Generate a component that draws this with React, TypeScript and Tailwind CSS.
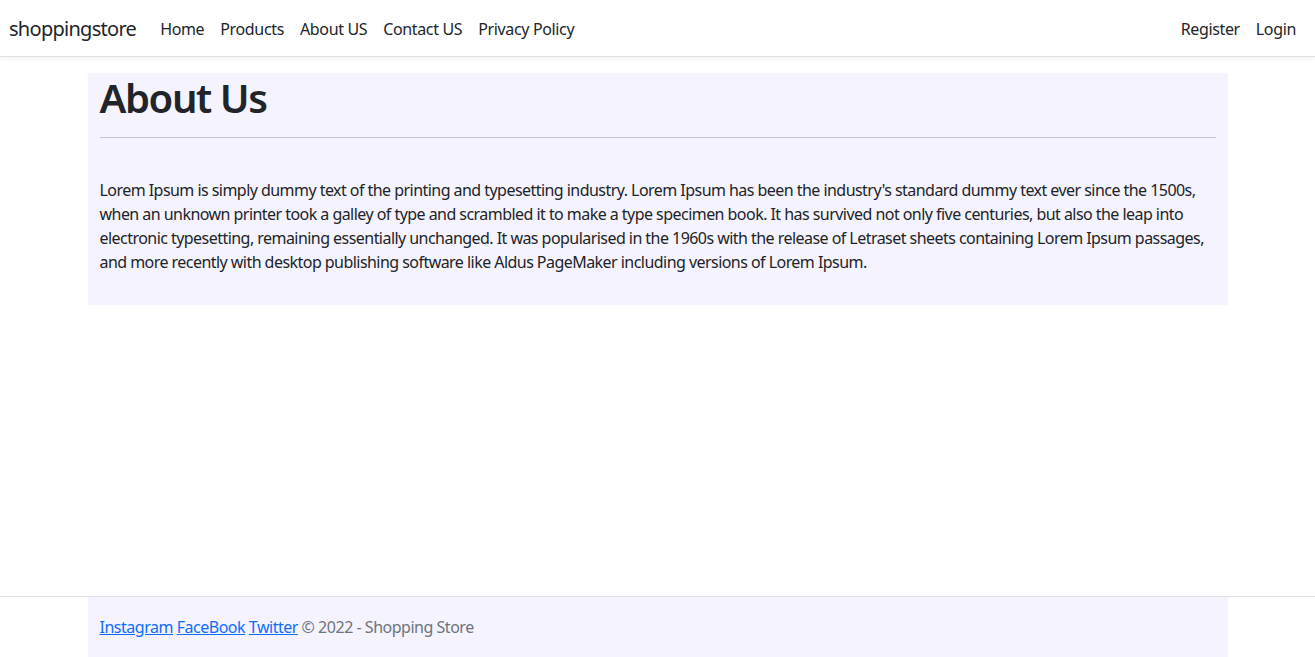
import React from "react";

const font = { fontFamily: '"Noto Sans", "Open Sans", sans-serif' };

export default function App() {
  return (
    <div className="flex min-h-[657px] flex-col bg-white tracking-[-0.034em] text-[#212529]" style={font}>
      <nav className="flex h-[57px] items-center border-b border-[#dee2e6] bg-white pl-[9px] pr-[11px] pt-[1px] shadow-[0_2px_4px_rgba(0,0,0,0.05)]">
        <a className="mr-4 text-[20px] leading-[30px] tracking-[-0.036em] text-[#212529]">shoppingstore</a>
        <ul className="flex flex-1 items-center text-[16px] leading-[24px] tracking-[-0.022em]">
          {["Home", "Products", "About US", "Contact US", "Privacy Policy"].map((t) => (
            <li key={t}><a className="px-2 text-[#212529]">{t}</a></li>
          ))}
        </ul>
        <ul className="flex items-center text-[16px] leading-[24px] tracking-[-0.022em]">
          {["Register", "Login"].map((t) => (
            <li key={t}><a className="px-2 text-[#212529]">{t}</a></li>
          ))}
        </ul>
      </nav>
      <main className="flex-1 pt-4">
        <div className="mx-auto w-[1140px] bg-[#f5f3fe] px-3 pb-[15px]">
          <h1 className="pt-[1px] text-[40px] font-semibold leading-[48px] tracking-[-0.035em]">About Us</h1>
          <hr className="mt-[15px] mb-4 border-t border-[#c4c2cb]" />
          <div className="h-6" />
          <p className="mb-4 text-[16px] leading-[24px]">
            Lorem Ipsum is simply dummy text of the printing and typesetting industry. Lorem Ipsum has been the industry's standard dummy text ever since the 1500s, when an unknown printer took a galley of type and scrambled it to make a type specimen book. It has survived not only five centuries, but also the leap into electronic typesetting, remaining essentially unchanged. It was popularised in the 1960s with the release of Letraset sheets containing Lorem Ipsum passages, and more recently with desktop publishing software like Aldus PageMaker including versions of Lorem Ipsum.
          </p>
        </div>
      </main>
      <footer className="border-t border-[#dee2e6]">
        <div className="mx-auto w-[1140px] bg-[#f5f3fe] px-3 text-[16px] leading-[60px] tracking-[-0.03em] text-[#6c757d]">
          <a className="text-[#0d6efd] underline">Instagram</a>{" "}
          <a className="text-[#0d6efd] underline">FaceBook</a>{" "}
          <a className="text-[#0d6efd] underline">Twitter</a> © 2022 - Shopping Store
        </div>
      </footer>
    </div>
  );
}
